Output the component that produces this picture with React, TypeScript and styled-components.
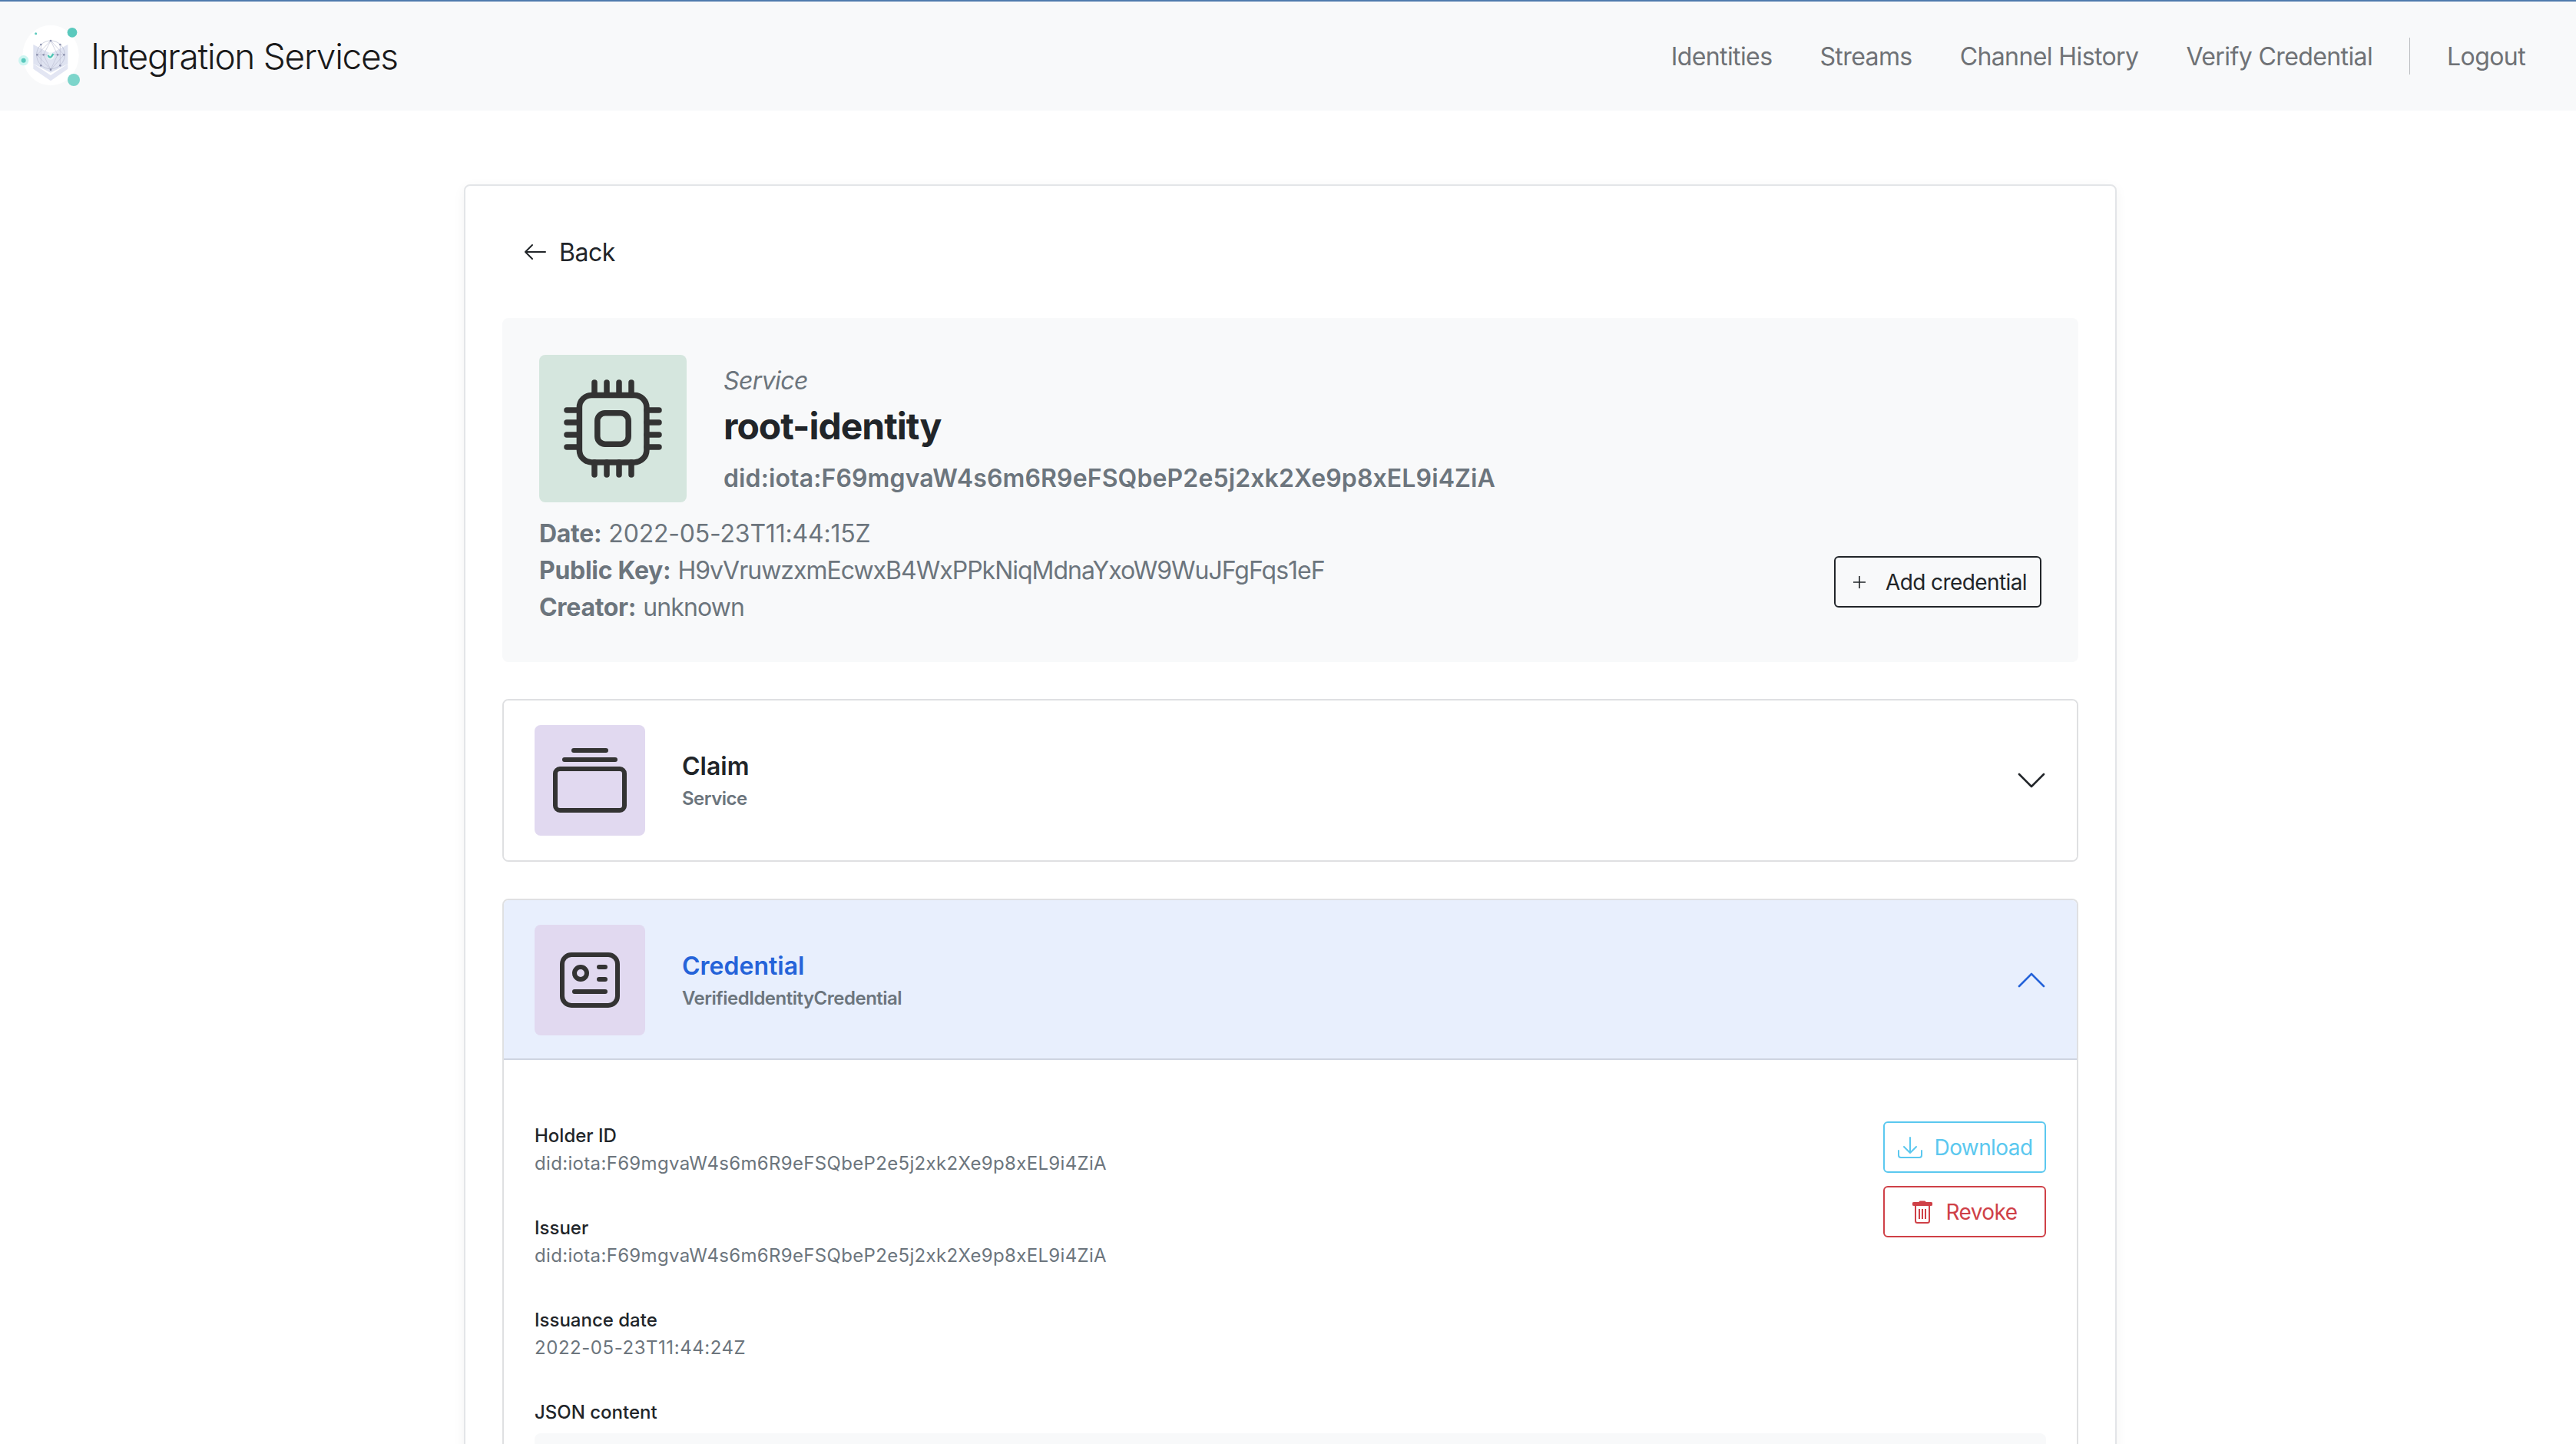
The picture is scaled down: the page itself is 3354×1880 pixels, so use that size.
import React from 'react'
import styled, { createGlobalStyle } from 'styled-components'

const GlobalStyle = createGlobalStyle`
  html, body {
    margin: 0;
    padding: 0;
    height: 1880px;
    overflow: hidden;
    background: #fff;
    font-family: Inter, 'Noto Sans', sans-serif;
    color: #212529;
  }
  * { box-sizing: border-box; }
`

const DID = 'did:iota:F69mgvaW4s6m6R9eFSQbeP2e5j2xk2Xe9p8xEL9i4ZiA'

const logoNodes = [
  [100, 90], [175, 90], [138, 75], [85, 130], [190, 130],
  [100, 172], [175, 172], [138, 188], [110, 130], [165, 130],
]

function Logo() {
  return (
    <svg width="90" height="90" viewBox="0 0 270 270">
      <ellipse cx="138" cy="132" rx="110" ry="118" fill="#fff" />
      <path d="M70 185 L138 232 L205 185 L205 165 L138 210 L70 165 Z" fill="#e3e6f3" />
      <path d="M70 90 L138 125 L205 90 L205 165 L138 200 L70 165 Z" fill="#dfe3f1" />
      <circle cx="138" cy="130" r="55" fill="none" stroke="#b4b8cd" strokeWidth="2" />
      <path d="M85 130 L138 75 L190 130 L138 188 Z M85 130 H190 M100 90 L100 172 M175 90 L175 172 M110 130 L138 75 L165 130 L138 188 Z" fill="none" stroke="#bcc0d3" strokeWidth="2" />
      {logoNodes.map(([x, y]) => (
        <circle key={`${x}-${y}`} cx={x} cy={y} r="4" fill="#8f94b0" />
      ))}
      <circle cx="138" cy="135" r="14" fill="#eaf7f5" />
      <path d="M128 132 Q136 150 148 126" fill="none" stroke="#4fc4b6" strokeWidth="7" />
      <circle cx="222" cy="43" r="19" fill="#5ac9bd" />
      <circle cx="228" cy="228" r="24" fill="#7dd5cb" />
      <circle cx="32" cy="152" r="20" fill="#cdf5f1" />
      <circle cx="32" cy="152" r="9" fill="#5ac9bd" />
      <circle cx="80" cy="47" r="4.5" fill="#5ac9bd" />
    </svg>
  )
}

function ChipIcon() {
  return (
    <svg width="132" height="132" viewBox="0 0 132 132" fill="none" stroke="#333" strokeWidth="7.5" strokeLinecap="round" strokeLinejoin="round">
      <rect x="22.4" y="22.4" width="87.5" height="87.5" rx="16" />
      <rect x="45.8" y="45.8" width="40.4" height="40.4" rx="10" />
      <path d="M42 6v16M58 6v16M74 6v16M90 6v16M42 110v16M58 110v16M74 110v16M90 110v16" />
      <path d="M6 42h16M6 58h16M6 74h16M6 90h16M110 42h16M110 58h16M110 74h16M110 90h16" />
    </svg>
  )
}

function StackIcon() {
  return (
    <svg width="96" height="84" viewBox="0 0 96 84" fill="none" stroke="#333" strokeWidth="6" strokeLinecap="round" strokeLinejoin="round">
      <path d="M27 3h42M15 15h66" />
      <rect x="3" y="27" width="90" height="54" rx="6" />
    </svg>
  )
}

function CredentialIcon() {
  return (
    <svg width="78" height="72" viewBox="0 0 78 72" fill="none" stroke="#333" strokeWidth="6" strokeLinecap="round" strokeLinejoin="round">
      <rect x="3" y="3" width="72" height="66" rx="12" />
      <circle cx="27" cy="27" r="8" />
      <path d="M51 19h8M51 35h8M19 51h40" />
    </svg>
  )
}

function Chevron({ up, color }: { up?: boolean; color: string }) {
  return (
    <svg width="36" height="20" viewBox="0 0 36 20" fill="none" stroke={color} strokeWidth="2.6" strokeLinecap="round" strokeLinejoin="round">
      <path d={up ? 'M2 18 L18 2 L34 18' : 'M2 2 L18 18 L34 2'} />
    </svg>
  )
}

function DownloadIcon() {
  return (
    <svg width="34" height="30" viewBox="0 0 34 30" fill="none" stroke="#5bc8ef" strokeWidth="2" strokeLinecap="round" strokeLinejoin="round">
      <path d="M17 2v20M9 14l8 8 8-8" />
      <path d="M2 19v6a3 3 0 0 0 3 3h24a3 3 0 0 0 3-3v-6" />
    </svg>
  )
}

function TrashIcon() {
  return (
    <svg width="26" height="30" viewBox="0 0 26 30" fill="none" stroke="#cf4047" strokeWidth="2">
      <path d="M2 4.5h22" strokeWidth="5" strokeLinecap="round" />
      <path d="M10 2h6" strokeWidth="3" strokeLinecap="round" />
      <path d="M4 7v19.5a2.5 2.5 0 0 0 2.5 2.5h13a2.5 2.5 0 0 0 2.5-2.5V7" />
      <path d="M9 11v13M13 11v13M17 11v13" />
    </svg>
  )
}

function PlusIcon() {
  return (
    <svg width="16" height="16" viewBox="0 0 16 16" fill="none" stroke="#212529" strokeWidth="1.6">
      <path d="M8 0v16M0 8h16" />
    </svg>
  )
}

const Header = styled.header`
  height: 144px;
  background: #f8f9fa;
  border-top: 2px solid #4f7aad;
  display: flex;
  align-items: center;
  justify-content: space-between;
  padding: 0 66px 0 20px;
`

const Brand = styled.div`
  display: flex;
  align-items: center;
  gap: 8px;
  font-size: 46px;
  font-weight: 300;
  letter-spacing: -1.3px;
  color: #1a1a1a;
`

const Nav = styled.nav`
  display: flex;
  align-items: center;
`

const NavLink = styled.a`
  font-size: 32px;
  letter-spacing: -0.6px;
  color: #6f7276;
  margin-left: 62px;
`

const NavDivider = styled.div`
  width: 1px;
  height: 48px;
  background: #b9bcbf;
  margin: 0 48px;
`

const LogoutLink = styled.a`
  font-size: 32px;
  letter-spacing: -0.6px;
  color: #6f7276;
`

const Card = styled.main`
  width: 2152px;
  margin: 96px 0 0 604px;
  padding: 0 48px;
  border: 2px solid #e3e5e8;
  border-radius: 8px;
  box-shadow: 0 4px 16px rgba(0, 0, 0, 0.05);
  background: #fff;
  height: 1800px;
`

const BackLink = styled.div`
  display: flex;
  align-items: center;
  gap: 16px;
  height: 172px;
  padding: 0 0 0 28px;
  font-size: 32px;
  letter-spacing: -0.5px;
  color: #212529;
`

const InfoPanel = styled.section`
  background: #f8f9fa;
  border-radius: 8px;
  padding: 48px;
  height: 448px;
  position: relative;
`

const InfoTop = styled.div`
  display: flex;
  gap: 48px;
`

const IconBox = styled.div<{ $size: number; $bg: string }>`
  width: ${p => p.$size}px;
  height: ${p => p.$size}px;
  background: ${p => p.$bg};
  border-radius: 8px;
  display: flex;
  align-items: center;
  justify-content: center;
  flex-shrink: 0;
`

const InfoText = styled.div`
  display: flex;
  flex-direction: column;
`

const Kind = styled.div`
  font-size: 32px;
  font-style: italic;
  letter-spacing: -0.6px;
  color: #6c757d;
  margin-top: 14px;
`

const Name = styled.h1`
  font-size: 48px;
  font-weight: 700;
  letter-spacing: -1px;
  margin: 10px 0 0;
  line-height: 60px;
`

const Did = styled.div`
  font-size: 32px;
  font-weight: 600;
  letter-spacing: 0.12px;
  color: #6c757d;
  margin-top: 18px;
`

const Meta = styled.div`
  margin-top: 17px;
  font-size: 32px;
  line-height: 48px;
  color: #6c757d;

  b {
    font-weight: 700;
    letter-spacing: -0.3px;
  }
`

const MetaValue = styled.span<{ $spacing: number }>`
  letter-spacing: ${p => p.$spacing}px;
`

const OutlineButton = styled.button<{ $color: string; $width: number }>`
  width: ${p => p.$width}px;
  height: 67px;
  display: flex;
  align-items: center;
  justify-content: center;
  background: transparent;
  border: 2px solid ${p => p.$color};
  border-radius: 6px;
  color: ${p => p.$color};
  font-family: inherit;
  font-size: 28px;
  letter-spacing: -0.6px;
  padding: 0;
`

const AddButton = styled(OutlineButton)`
  position: absolute;
  right: 48px;
  bottom: 71px;
  padding-left: 6px;

  svg {
    margin-right: 26px;
  }
`

const Accordion = styled.section`
  margin-top: 48px;
  border: 2px solid #dfe0e2;
  border-radius: 8px;
  overflow: hidden;
`

const AccordionHead = styled.div<{ $open?: boolean }>`
  display: flex;
  align-items: center;
  padding: ${p => (p.$open ? '32px 41px 30px 40px' : '32px 41px 32px 40px')};
  background: ${p => (p.$open ? '#e8effd' : '#fff')};
  border-bottom: ${p => (p.$open ? '2px solid #ced4e0' : 'none')};
`

const HeadText = styled.div`
  flex: 1;
  margin-left: 48px;
`

const HeadTitle = styled.div<{ $open?: boolean }>`
  font-size: 32px;
  font-weight: 600;
  color: ${p => (p.$open ? '#2563d9' : '#212529')};
`

const HeadSub = styled.div`
  font-size: 24px;
  font-weight: 600;
  letter-spacing: -0.5px;
  color: #6c757d;
  margin-top: 8px;
`

const AccordionBody = styled.div`
  padding: 80px 40px 0;
  height: 600px;
`

const DetailRow = styled.div`
  display: flex;
  justify-content: space-between;
`

const Fields = styled.div`
  flex: 1;
  padding-top: 1px;
`

const FieldLabel = styled.div`
  font-size: 24px;
  font-weight: 500;
  line-height: 36px;
  color: #212529;
`

const FieldValue = styled.div`
  font-size: 24px;
  letter-spacing: 0.33px;
  line-height: 36px;
  color: #6c757d;
  margin-bottom: 48px;
`

const DateValue = styled(FieldValue)`
  letter-spacing: 0.55px;
`

const Actions = styled.div`
  display: flex;
  flex-direction: column;
  gap: 17px;
`

const ButtonIcon = styled.span<{ $gap: number }>`
  display: flex;
  margin-right: ${p => p.$gap}px;
`

const JsonBox = styled.div`
  height: 200px;
  background: #f8f9fa;
  border-radius: 8px;
  margin-top: 9px;
`

export default function App() {
  return (
    <>
      <GlobalStyle />
      <Header>
        <Brand>
          <Logo />
          Integration Services
        </Brand>
        <Nav>
          <NavLink>Identities</NavLink>
          <NavLink>Streams</NavLink>
          <NavLink>Channel History</NavLink>
          <NavLink>Verify Credential</NavLink>
          <NavDivider />
          <LogoutLink>Logout</LogoutLink>
        </Nav>
      </Header>
      <Card>
        <BackLink>
          <svg width="30" height="22" viewBox="0 0 30 22" fill="none" stroke="#212529" strokeWidth="2" strokeLinecap="round" strokeLinejoin="round">
            <path d="M28 11H2M11 2l-9 9 9 9" />
          </svg>
          Back
        </BackLink>
        <InfoPanel>
          <InfoTop>
            <IconBox $size={192} $bg="#d5e6de">
              <ChipIcon />
            </IconBox>
            <InfoText>
              <Kind>Service</Kind>
              <Name>root-identity</Name>
              <Did>{DID}</Did>
            </InfoText>
          </InfoTop>
          <Meta>
            <div><b>Date:</b> <MetaValue $spacing={-0.2}>2022-05-23T11:44:15Z</MetaValue></div>
            <div><b>Public Key:</b> <MetaValue $spacing={-1}>H9vVruwzxmEcwxB4WxPPkNiqMdnaYxoW9WuJFgFqs1eF</MetaValue></div>
            <div><b>Creator:</b> <MetaValue $spacing={-0.9}>unknown</MetaValue></div>
          </Meta>
          <AddButton $color="#212529" $width={270}>
            <PlusIcon />
            Add credential
          </AddButton>
        </InfoPanel>
        <Accordion>
          <AccordionHead>
            <IconBox $size={144} $bg="#e1d9f0">
              <StackIcon />
            </IconBox>
            <HeadText>
              <HeadTitle>Claim</HeadTitle>
              <HeadSub>Service</HeadSub>
            </HeadText>
            <Chevron color="#212529" />
          </AccordionHead>
        </Accordion>
        <Accordion>
          <AccordionHead $open>
            <IconBox $size={144} $bg="#e1d9f0">
              <CredentialIcon />
            </IconBox>
            <HeadText>
              <HeadTitle $open>Credential</HeadTitle>
              <HeadSub>VerifiedIdentityCredential</HeadSub>
            </HeadText>
            <Chevron up color="#2563d9" />
          </AccordionHead>
          <AccordionBody>
            <DetailRow>
              <Fields>
                <FieldLabel>Holder ID</FieldLabel>
                <FieldValue>{DID}</FieldValue>
                <FieldLabel>Issuer</FieldLabel>
                <FieldValue>{DID}</FieldValue>
                <FieldLabel>Issuance date</FieldLabel>
                <DateValue>2022-05-23T11:44:24Z</DateValue>
                <FieldLabel>JSON content</FieldLabel>
              </Fields>
              <Actions>
                <OutlineButton $color="#5bc8ef" $width={212}>
                  <ButtonIcon $gap={15}><DownloadIcon /></ButtonIcon>
                  Download
                </OutlineButton>
                <OutlineButton $color="#cf4047" $width={212}>
                  <ButtonIcon $gap={18}><TrashIcon /></ButtonIcon>
                  Revoke
                </OutlineButton>
              </Actions>
            </DetailRow>
            <JsonBox />
          </AccordionBody>
        </Accordion>
      </Card>
    </>
  )
}
